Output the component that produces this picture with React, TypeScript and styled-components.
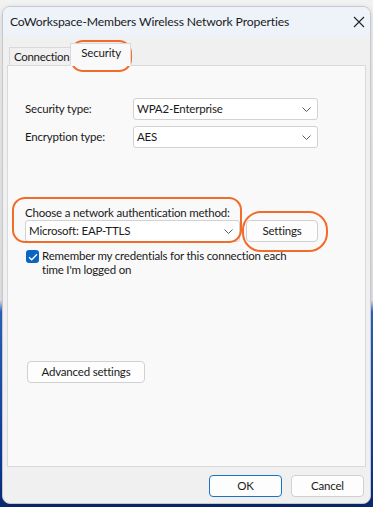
import React from 'react';
import styled, { createGlobalStyle } from 'styled-components';

const GlobalStyle = createGlobalStyle`
  html, body {
    margin: 0;
    padding: 0;
  }
  body {
    font-family: Lato, "Noto Sans", sans-serif;
    font-size: 11.5px;
    letter-spacing: -0.2px;
    line-height: 14px;
    color: #1a1a1a;
  }
`;

const Desktop = styled.div`
  width: 373px;
  height: 507px;
  overflow: hidden;
  background: linear-gradient(
    to bottom,
    #f2f2f2 0,
    #e6e6e6 300px,
    #2a63c4 312px,
    #0d3a9a 470px,
    #0a2a6e 507px
  );
  padding: 6px 2px 0 2px;
  box-sizing: border-box;
`;

const Window = styled.div`
  position: relative;
  width: 369px;
  height: 498px;
  border-radius: 8px;
  border: 1px solid #c4c8cf;
  box-sizing: border-box;
  background: #f0f0f0;
  overflow: hidden;
  display: flex;
  flex-direction: column;
  box-shadow: 0 2px 6px rgba(0, 0, 0, 0.15);
`;

const TitleBar = styled.div`
  height: 30px;
  flex: none;
  background: #eef3fa;
  display: flex;
  align-items: center;
  justify-content: space-between;
  padding: 0 5px 0 7px;
`;

const Title = styled.div`
  font-size: 12.2px;
  letter-spacing: -0.15px;
  color: #1b1b1b;
`;

const Body = styled.div`
  flex: 1;
  display: flex;
  flex-direction: column;
  padding: 5px 4px 0 4px;
`;

const TabRow = styled.div`
  display: flex;
  align-items: flex-end;
  height: 23px;
  padding-left: 2px;
  position: relative;
  z-index: 1;
`;

const Tab = styled.div<{ $active?: boolean }>`
  height: ${({ $active }) => ($active ? '23px' : '19px')};
  ${({ $active }) => ($active ? 'width: 61px;' : '')}
  white-space: nowrap;
  padding: ${({ $active }) => ($active ? '0 0 4px 10px' : '0 1px 0 4px')};
  letter-spacing: ${({ $active }) => ($active ? '-0.2px' : '-0.3px')};
  display: flex;
  align-items: center;
  box-sizing: border-box;
  background: ${({ $active }) => ($active ? '#f9f9f9' : '#f0f0f0')};
  border: 1px solid #d9d9d9;
  border-bottom: ${({ $active }) => ($active ? '1px solid #f9f9f9' : '1px solid #d9d9d9')};
  margin-bottom: -1px;
  ${({ $active }) => ($active ? 'margin-left: -1px;' : '')}
`;

const Panel = styled.div`
  height: 402px;
  flex: none;
  background: #f9f9f9;
  border: 1px solid #d9d9d9;
  box-sizing: border-box;
  display: flex;
  flex-direction: column;
  padding: 32px 0 0 16px;
`;

const FieldGrid = styled.div`
  display: grid;
  grid-template-columns: 109px 185px;
  row-gap: 6px;
  align-items: center;
`;

const Combo = styled.div<{ $width?: number }>`
  height: 22px;
  box-sizing: border-box;
  ${({ $width }) => ($width ? `width: ${$width}px;` : '')}
  background: #ffffff;
  border: 1px solid #d2d2d2;
  border-radius: 3px;
  display: flex;
  align-items: center;
  justify-content: space-between;
  padding: 0 6px 0 3px;
`;

const Label = styled.div`
  padding-left: 1px;
`;

const AuthGroup = styled.div`
  margin-top: 58px;
  display: flex;
  flex-direction: column;
  padding-left: 1px;
`;

const AuthRow = styled.div`
  display: flex;
  align-items: center;
  gap: 6px;
`;

const Button = styled.div<{ $width: number; $default?: boolean }>`
  width: ${({ $width }) => $width}px;
  height: 22px;
  box-sizing: border-box;
  background: #fdfdfd;
  border: 1px solid ${({ $default }) => ($default ? '#1a73c8' : '#d0d0d0')};
  border-radius: 4px;
  display: flex;
  align-items: center;
  justify-content: center;
`;

const CheckRow = styled.div`
  display: flex;
  align-items: flex-start;
  gap: 3px;
  margin-top: 7px;
  padding-left: 2px;
  line-height: 14px;
`;

const CheckBox = styled.div`
  width: 13px;
  height: 13px;
  flex: none;
  border-radius: 3px;
  background: #0a64c2;
  display: flex;
  align-items: center;
  justify-content: center;
  margin-top: 1px;
`;

const CheckText = styled.div`
  width: 250px;
`;

const AdvancedWrap = styled.div`
  margin-top: 84px;
  padding-left: 3px;
`;

const Footer = styled.div`
  flex: 1;
  display: flex;
  justify-content: flex-end;
  align-items: flex-start;
  gap: 9px;
  padding: 8px 2px 0 0;
`;

const Annotation = styled.div<{ $x: number; $y: number; $w: number; $h: number; $r: number }>`
  position: absolute;
  left: ${({ $x }) => $x}px;
  top: ${({ $y }) => $y}px;
  width: ${({ $w }) => $w}px;
  height: ${({ $h }) => $h}px;
  border: 2px solid #f26b2b;
  border-radius: ${({ $r }) => $r}px;
  box-sizing: border-box;
  pointer-events: none;
`;

const Chevron = () => (
  <svg width="9" height="5" viewBox="0 0 9 5">
    <path d="M0.5 0.5 L4.5 4.5 L8.5 0.5" fill="none" stroke="#5a5a5a" strokeWidth="1" />
  </svg>
);

const CloseIcon = () => (
  <svg width="12" height="12" viewBox="0 0 12 12">
    <path d="M1 1 L11 11 M11 1 L1 11" stroke="#222" strokeWidth="1.1" />
  </svg>
);

const Check = () => (
  <svg width="10" height="8" viewBox="0 0 10 8">
    <path d="M1 4.2 L3.7 6.8 L9 1.2" fill="none" stroke="#fff" strokeWidth="1.3" />
  </svg>
);

const App = () => (
  <>
    <GlobalStyle />
    <Desktop>
      <Window>
        <TitleBar>
          <Title>CoWorkspace-Members Wireless Network Properties</Title>
          <CloseIcon />
        </TitleBar>
        <Body>
          <TabRow>
            <Tab>Connection</Tab>
            <Tab $active>Security</Tab>
          </TabRow>
          <Panel>
            <FieldGrid>
              <Label>Security type:</Label>
              <Combo>
                WPA2-Enterprise
                <Chevron />
              </Combo>
              <Label>Encryption type:</Label>
              <Combo>
                AES
                <Chevron />
              </Combo>
            </FieldGrid>
            <AuthGroup>
              <div>Choose a network authentication method:</div>
              <AuthRow>
                <Combo $width={215}>
                  Microsoft: EAP-TTLS
                  <Chevron />
                </Combo>
                <Button $width={72}>Settings</Button>
              </AuthRow>
            </AuthGroup>
            <CheckRow>
              <CheckBox>
                <Check />
              </CheckBox>
              <CheckText>
                Remember my credentials for this connection each time I'm logged on
              </CheckText>
            </CheckRow>
            <AdvancedWrap>
              <Button $width={118}>Advanced settings</Button>
            </AdvancedWrap>
          </Panel>
          <Footer>
            <Button $width={73} $default>
              OK
            </Button>
            <Button $width={73}>Cancel</Button>
          </Footer>
        </Body>
        <Annotation $x={67} $y={33} $w={62} $h={32} $r={13} />
        <Annotation $x={9} $y={190} $w={230} $h={46} $r={13} />
        <Annotation $x={239} $y={204} $w={86} $h={41} $r={19} />
      </Window>
    </Desktop>
  </>
);

export default App;
